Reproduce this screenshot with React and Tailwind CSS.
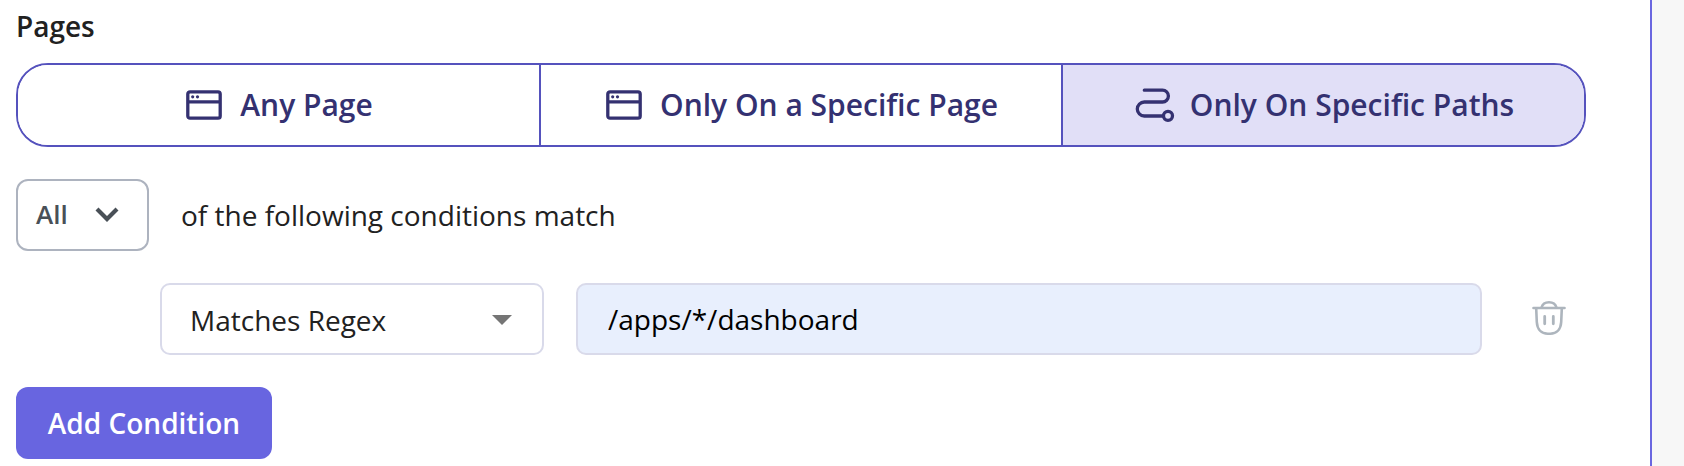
import React, { useState } from "react";

const WindowIcon = () => (
  <svg width="36" height="30" viewBox="0 0 36 30" fill="none" className="shrink-0">
    <rect x="1.8" y="1.8" width="32.4" height="26.4" rx="2.2" stroke="currentColor" strokeWidth="3.3" />
    <path d="M1 11.8h34" stroke="currentColor" strokeWidth="3.2" />
    <circle cx="6.7" cy="6.8" r="1.6" fill="currentColor" />
    <circle cx="11.5" cy="6.8" r="1.6" fill="currentColor" />
  </svg>
);

const PathIcon = () => (
  <svg width="40" height="36" viewBox="0 0 40 36" fill="none" className="shrink-0">
    <path
      d="M9.3 3.2H27.500a5.900 5.900 0 0 1 0 11.800H9.300a7 7 0 0 0 0 14H28"
      stroke="currentColor"
      strokeWidth="3.3"
      strokeLinecap="round"
    />
    <circle cx="33" cy="28.8" r="4.5" stroke="currentColor" strokeWidth="3.3" />
  </svg>
);

const TrashIcon = () => (
  <svg width="34" height="36" viewBox="0 0 34 36" fill="none" stroke="currentColor" strokeWidth="2.6" strokeLinecap="round">
    <path d="M1.5 8h31" />
    <path d="M9.5 7.5C10.5 4 13 2.2 17 2.2s6.5 1.8 7.5 5.3" />
    <path d="M4.2 8.5l.6 13.5c.4 7.5 4.7 11.7 11 11.7h2.4c6.3 0 10.6-4.2 11-11.7l.6-13.5" />
    <path d="M12.7 16.5v7.3M21.3 16.5v7.3" strokeWidth="2.8" />
  </svg>
);

const options = [
  { id: "any", label: "Any Page", icon: WindowIcon },
  { id: "page", label: "Only On a Specific Page", icon: WindowIcon },
  { id: "paths", label: "Only On Specific Paths", icon: PathIcon },
];

const App = () => {
  const [selected, setSelected] = useState("paths");
  const [path, setPath] = useState("/apps/*/dashboard");

  return (
    <div className="flex h-[466px] w-full overflow-hidden bg-[#f7f7f7] font-['Open_Sans',sans-serif] text-[28px] text-[#212121]">
      <div className="w-[1652px] border-r-2 border-[#6a67e0] bg-white pl-4">
        <h2 className="h-[63px] pt-1.5 font-semibold leading-10">Pages</h2>

        <div className="grid h-[84px] w-[1570px] grid-cols-[523px_522px_521px] overflow-hidden rounded-[32px] border-2 border-[#5552bd]">
          {options.map(({ id, label, icon: Icon }) => (
            <button
              key={id}
              type="button"
              onClick={() => setSelected(id)}
              className={`flex items-center justify-center border-r-2 border-[#5552bd] pb-px pl-0.5 text-[30px] font-semibold text-[#343171] last:border-r-0 ${
                selected === id ? "bg-[#e1dff7]" : "bg-white"
              } ${id === "paths" ? "gap-[15px]" : "gap-[18px]"}`}
            >
              <Icon />
              <span>{label}</span>
            </button>
          ))}
        </div>

        <div className="mt-8 flex h-[72px] items-center gap-8">
          <button
            type="button"
            className="flex h-full w-[133px] items-center justify-between rounded-xl border-2 border-[#adb3bf] pb-0.5 pl-[18px] pr-7 text-[26px] font-semibold text-[#495057]"
          >
            <span>All</span>
            <svg width="24" height="16" viewBox="0 0 24 16" fill="none">
              <path d="M2 3l10 10L22 3" stroke="currentColor" strokeWidth="4.2" />
            </svg>
          </button>
          <span>of the following conditions match</span>
        </div>

        <div className="mt-8 flex h-[72px] items-center pl-36">
          <button
            type="button"
            className="flex h-full w-[384px] items-center justify-between rounded-[10px] border-2 border-[#d9daea] pl-7 pr-[30px] pt-0.5"
          >
            <span>Matches Regex</span>
            <svg width="20" height="10" viewBox="0 0 20 10">
              <path d="M0 0h20L10 10z" fill="#757575" />
            </svg>
          </button>
          <input
            type="text"
            value={path}
            onChange={(e) => setPath(e.target.value)}
            className="ml-8 h-full w-[906px] rounded-[10px] border-2 border-[#d9daea] bg-[#e8effd] px-[30px] text-black outline-none"
          />
          <button type="button" aria-label="Delete condition" className="ml-[50px] pb-0.5 text-[#adb5bd]">
            <TrashIcon />
          </button>
        </div>

        <button type="button" className="mt-8 h-[72px] w-64 rounded-xl bg-[#6865e0] font-semibold text-white">
          Add Condition
        </button>
      </div>
    </div>
  );
};

export default App;
